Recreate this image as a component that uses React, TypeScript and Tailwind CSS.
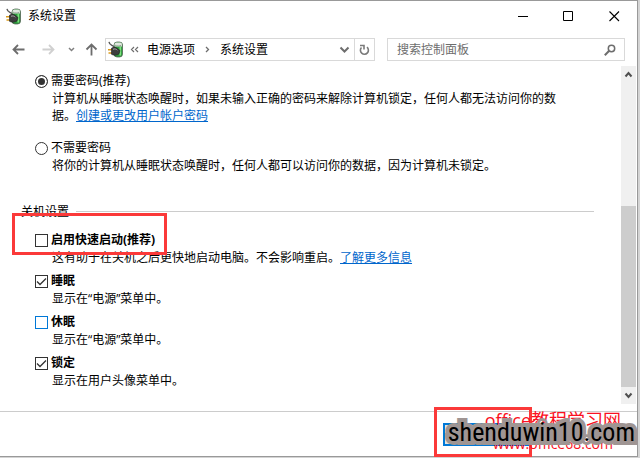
import type { ReactNode } from "react";

const options = [
  {
    id: "need-password",
    label: "需要密码(推荐)",
    checked: true,
    text: "计算机从睡眠状态唤醒时，如果未输入正确的密码来解除计算机锁定，任何人都无法访问你的数据。",
    link: "创建或更改用户帐户密码",
  },
  {
    id: "no-password",
    label: "不需要密码",
    checked: false,
    text: "将你的计算机从睡眠状态唤醒时，任何人都可以访问你的数据，因为计算机未锁定。",
  },
];

const shutdown = [
  {
    id: "fast-startup",
    label: "启用快速启动(推荐)",
    checked: false,
    text: "这有助于在关机之后更快地启动电脑。不会影响重启。",
    link: "了解更多信息",
  },
  { id: "sleep", label: "睡眠", checked: true, text: "显示在“电源”菜单中。" },
  {
    id: "hibernate",
    label: "休眠",
    checked: false,
    focused: true,
    text: "显示在“电源”菜单中。",
  },
  { id: "lock", label: "锁定", checked: true, text: "显示在用户头像菜单中。" },
];

function PowerIcon() {
  return (
    <svg width="17" height="17" viewBox="0 0 17 17" className="shrink-0" aria-hidden="true">
      <rect x="6" y="1" width="8.500" height="15" rx="3" fill="#2f9e3f" stroke="#4a554b" strokeWidth=".7" />
      <path d="M6.500 3.500c0-1.300.8-2 1.800-2h3.900c1 0 1.800.7 1.800 2v2H6.500z" fill="#dfe8de" />
      <path d="M7 4.200c2 1 4.500 1 6.300 0" fill="none" stroke="#8a948a" strokeWidth=".8" />
      <path d="M12.300 6v8.500" stroke="#7fe07f" strokeWidth="1.600" />
      <path d="M1 .8c.3 2.600 2 3 3.500 3.800s1.500 2 2.500 3" fill="none" stroke="#5b5b5b" strokeWidth="1.400" />
      <path d="M0 8.700h4M.5 12h4" stroke="#d99a1c" strokeWidth="1.600" />
      <path d="M3.500 7.200c2-1.500 5-1 6.500.8l2 1.500-1 3.300c-2 1.800-5.500 1.800-7.500.5z" fill="#3d3d3d" stroke="#1f1f1f" strokeWidth=".6" />
      <path d="M5 8.300c1.500-.7 3.200-.4 4.300.9" fill="none" stroke="#a8a8a8" strokeWidth="1" />
    </svg>
  );
}

function Glyph({ d, size, color, width = "1.500" }: { d: string; size: number; color: string; width?: string }) {
  return (
    <svg width={size} height={size} viewBox={`0 0 ${size} ${size}`} fill="none" stroke={color} strokeWidth={width} aria-hidden="true">
      <path d={d} />
    </svg>
  );
}

function TitleBar() {
  return (
    <header className="flex h-[30px] items-center pl-1.5">
      <PowerIcon />
      <h1 className="ml-[5px] flex-1">系统设置</h1>
      <button type="button" aria-label="最小化" className="flex w-[45px] justify-center">
        <Glyph size={11} color="#000" width="1" d="M0 5.500h10" />
      </button>
      <button type="button" aria-label="最大化" className="flex w-[45px] justify-center">
        <Glyph size={11} color="#000" width="1" d="M.5.5h9v9h-9z" />
      </button>
      <button type="button" aria-label="关闭" className="flex w-[46px] justify-center">
        <Glyph size={11} color="#000" width="1.100" d="M.5.5l9.500 9.500M10 .5L.5 10" />
      </button>
    </header>
  );
}

function NavBar() {
  return (
    <nav className="flex h-[34px] items-center pt-[3px] pr-3 pl-3">
      <button type="button" aria-label="后退">
        <Glyph size={13} color="#6d6d6d" width="1.800" d="M12.500 6.500H1.500M6 2L1.500 6.500 6 11" />
      </button>
      <button type="button" aria-label="前进" className="ml-[17px]">
        <Glyph size={13} color="#d0d0d0" width="1.800" d="M.5 6.500h11M7 2l4.500 4.500L7 11" />
      </button>
      <button type="button" aria-label="最近浏览的位置" className="ml-3">
        <Glyph size={9} color="#808080" width="1.500" d="M2 3l2.500 2.500L7 3" />
      </button>
      <button type="button" aria-label="上移" className="ml-[9px]">
        <Glyph size={13} color="#6d6d6d" width="1.800" d="M6.500 12.500V1.500M1.500 6.500l5-5 5 5" />
      </button>
      <div className="ml-[7px] flex h-[23px] flex-1 items-center border border-[#d9d9d9]">
        <div className="flex flex-1 items-center pl-0.5">
          <PowerIcon />
          <span className="ml-[5px]">
            <Glyph size={9} color="#6d6d6d" width="1.200" d="M4 2L1.500 4.500 4 7M8 2L5.500 4.500 8 7" />
          </span>
          <a href="#power" className="ml-2">电源选项</a>
          <span className="ml-2">
            <Glyph size={9} color="#6d6d6d" width="1.300" d="M3 2l2.500 2.500L3 7" />
          </span>
          <a href="#system" className="ml-2">系统设置</a>
        </div>
        <button type="button" aria-label="历史记录" className="mr-1">
          <Glyph size={11} color="#6d6d6d" width="2" d="M1.500 3.500l4 4 4-4" />
        </button>
        <button type="button" aria-label="刷新" className="flex h-full w-5 items-center justify-center border-l border-[#d9d9d9]">
          <svg width="11" height="12" viewBox="0 0 11 12" fill="none" stroke="#7a7a7a" strokeWidth="1.600" aria-hidden="true">
            <path d="M8 3.200A4 4 0 1 1 2.500 3.500" />
            <path d="M1 1.500h4v4" />
          </svg>
        </button>
      </div>
      <div className="ml-3 flex h-[23px] w-[238px] items-center border border-[#d9d9d9] pr-2 pl-[9px]">
        <input
          type="text"
          aria-label="搜索控制面板"
          placeholder="搜索控制面板"
          className="min-w-0 flex-1 placeholder:text-[#6d6d6d] placeholder:opacity-100"
        />
        <svg width="12" height="12" viewBox="0 0 12 12" fill="none" stroke="#6d6d6d" strokeWidth="1.500" aria-hidden="true">
          <circle cx="7.500" cy="4.500" r="3.200" />
          <path d="M5.200 6.800L.8 11.200" strokeWidth="2" />
        </svg>
      </div>
    </nav>
  );
}

function Description({ text, link }: { text: string; link?: string }) {
  return (
    <p className="pl-[17px] leading-[17px]">
      {text}
      {link ? (
        <a href="#more" className="text-[#0066cc] underline">
          {link}
        </a>
      ) : null}
    </p>
  );
}

function Row({ children }: { children: ReactNode }) {
  return <div className="flex h-[19px] items-center gap-[3px]">{children}</div>;
}

export default function App() {
  return (
    <div className="bg-[#d4d4d4] pr-0.5 pb-px font-['Open_Sans','Noto_Sans_CJK_SC',sans-serif] text-xs text-black">
      <div className="relative flex h-[calc(100vh-1px)] flex-col border-t border-r border-b border-[#999] bg-white">
        <TitleBar />
        <NavBar />

        <main className="mt-px flex min-h-0 flex-1">
          <div className="min-w-0 flex-1 overflow-hidden pt-[5px] pl-[35px]">
            <div className="flex max-w-[524px] flex-col gap-3.5">
              {options.map((option) => (
                <div key={option.id}>
                  <Row>
                    <input
                      id={option.id}
                      type="radio"
                      name="password"
                      defaultChecked={option.checked}
                      className="mt-0.5 size-[13px] appearance-none rounded-full border border-[#333] checked:bg-[#333] checked:shadow-[inset_0_0_0_2px_#fff]"
                    />
                    <label htmlFor={option.id}>{option.label}</label>
                  </Row>
                  <Description text={option.text} link={option.link} />
                </div>
              ))}
            </div>

            <h2 className="mt-[29px] -ml-3.5 mr-[27px] flex items-center gap-[7px] leading-[17px] after:h-px after:flex-1 after:bg-[#ccc]">
              关机设置
            </h2>

            <div className="mt-2.5 flex flex-col gap-[5px]">
              {shutdown.map((item) => (
                <div key={item.id}>
                  <Row>
                    <span className="relative mt-0.5 flex">
                      <input
                        id={item.id}
                        type="checkbox"
                        defaultChecked={item.checked}
                        className={`peer size-[13px] appearance-none border ${
                          item.focused ? "border-[#0078d7]" : "border-[#333]"
                        }`}
                      />
                      <svg
                        viewBox="0 0 13 13"
                        className="pointer-events-none absolute inset-0 hidden size-[13px] peer-checked:block"
                        fill="none"
                        stroke="#333"
                        strokeWidth="1.300"
                        aria-hidden="true"
                      >
                        <path d="M2 6.500l3 3 6-6" />
                      </svg>
                    </span>
                    <label htmlFor={item.id} className="font-bold">
                      {item.label}
                    </label>
                  </Row>
                  <Description text={item.text} link={item.link} />
                </div>
              ))}
            </div>
          </div>

          <div className="mr-px mb-[7px] flex w-[15px] flex-col bg-[#f0f0f0]">
            <button type="button" aria-label="向上滚动" className="flex h-[17px] items-center justify-center">
              <Glyph size={9} color="#505050" width="2" d="M1.500 6.500l3-3.500 3 3.500" />
            </button>
            <div className="mt-[123px] flex-1 bg-[#cdcdcd]" />
            <button type="button" aria-label="向下滚动" className="flex h-[17px] items-center justify-center">
              <Glyph size={9} color="#505050" width="2" d="M1.500 2.500l3 3.500 3-3.500" />
            </button>
          </div>
        </main>

        <footer className="flex h-[45px] items-center justify-end border-t border-[#ccc] pr-[107px]">
          <button
            type="button"
            aria-label="保存修改"
            className="h-[23px] w-[87px] border-2 border-[#0078d7] bg-[#e1e1e1]"
          />
        </footer>

        <div className="absolute top-[212px] left-3 h-[42px] w-[155px] border-3 border-[#fb3939]" />
        <div className="absolute right-[105px] -bottom-px h-[50px] w-[98px] border-3 border-[#fb3939]" />
        <p className="absolute right-4 bottom-6 text-lg leading-6 text-[#fa1022]">office教程学习网</p>
        <p className="absolute right-6 bottom-0.5 text-sm leading-5 text-[#fa1022]">www.office68.com</p>
        <p className="absolute right-0.5 bottom-1 font-['Roboto_Condensed','Open_Sans_Condensed','Lato',sans-serif] text-[26px] leading-10 [-webkit-text-stroke:8px_#9f9593] [paint-order:stroke_fill] [stroke-linejoin:round]">
          shenduwin10.com
        </p>
      </div>
    </div>
  );
}
